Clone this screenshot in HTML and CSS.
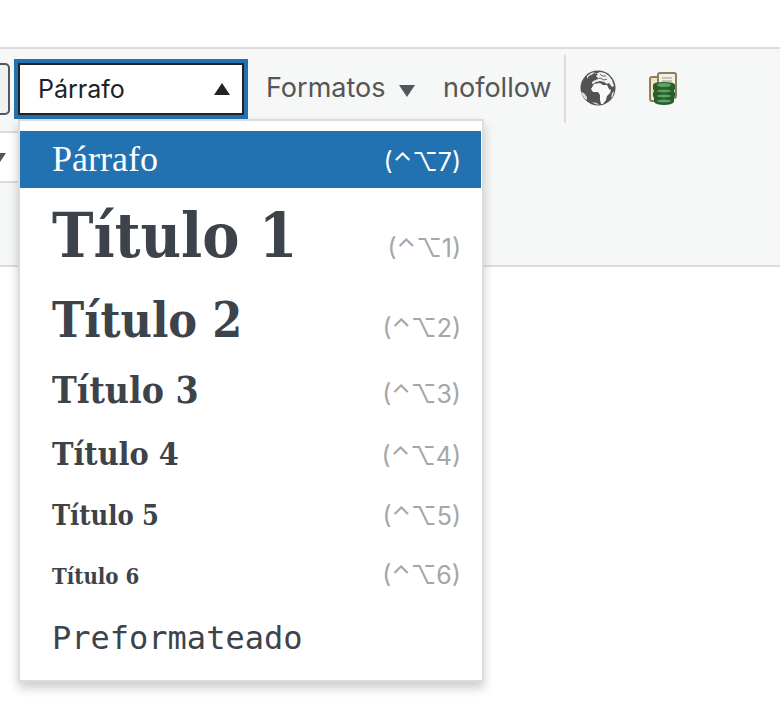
FILE: index.html
```html
<!DOCTYPE html>
<html lang="es">
<head>
	<meta charset="utf-8">
	<meta name="viewport" content="width=device-width, initial-scale=1">
	<title>Editor</title>
	<link rel="stylesheet" href="styles.css">
</head>
<body>
	<div class="editor">
		<div class="toolbar" role="toolbar">
			<div class="toolbar-row">
				<button type="button" class="edge-button" aria-label="Anterior"></button>
				<div class="format">
					<button type="button" class="listbox" id="format-button" aria-haspopup="true" aria-expanded="true">
						<span>Párrafo</span>
						<i class="caret caret-up"></i>
					</button>
					<div class="menu" role="menu" aria-labelledby="format-button">
						<button type="button" class="item p active" role="menuitem"><span>Párrafo</span><kbd>(⌃⌥7)</kbd></button>
						<button type="button" class="item h1" role="menuitem"><span>Título 1</span><kbd>(⌃⌥1)</kbd></button>
						<button type="button" class="item h2" role="menuitem"><span>Título 2</span><kbd>(⌃⌥2)</kbd></button>
						<button type="button" class="item h3" role="menuitem"><span>Título 3</span><kbd>(⌃⌥3)</kbd></button>
						<button type="button" class="item h4" role="menuitem"><span>Título 4</span><kbd>(⌃⌥4)</kbd></button>
						<button type="button" class="item h5" role="menuitem"><span>Título 5</span><kbd>(⌃⌥5)</kbd></button>
						<button type="button" class="item h6" role="menuitem"><span>Título 6</span><kbd>(⌃⌥6)</kbd></button>
						<button type="button" class="item pre" role="menuitem"><span>Preformateado</span></button>
					</div>
				</div>
				<button type="button" class="tool formats">Formatos <i class="caret caret-down"></i></button>
				<button type="button" class="tool">nofollow</button>
				<div class="tool-group">
					<button type="button" class="tool icon" aria-label="Enlace">
						<svg width="36" height="36" viewBox="0 0 36 36">
							<circle cx="18" cy="18" r="17.5" fill="#535353"/>
							<path fill="#f0f1f1" d="M15 4l5-2 5 1 4 3 3 4 2 6-2 1-3-4-2 1-3-2-4-1-3 1-2-1 3-3-2-2 2-2-3-1z"/>
							<path fill="none" stroke="#6b6b6b" d="M20 4l2 2 4 0M17 9l3-1 4 2 3-1"/>
							<path fill="#f8f9f9" d="M14 14l6-1 3 2 4 0 2 4 2 1-1 3-3 3-1 4-3 4-2 0-1-4 0-5-2-3-5 0-2-3z"/>
							<path fill="#e4e5e5" d="M12 12l3-2 2 1-2 2-3 1zM7 6l4-3 4-1-2 2-4 2-2 3z"/>
							<path fill="#dcdddd" d="M1 22l3 1 3 4 0 3-2-1-3-4zM12 32l5 1 2 2-4-1zM32 23l2-2-1 5-2 2z"/>
						</svg>
					</button>
					<button type="button" class="tool icon" aria-label="Insertar datos">
						<svg width="30" height="34" viewBox="0 0 30 34">
							<rect x="2" y="6" width="13" height="24" rx="2" fill="#efe6bd" stroke="#8c8061" stroke-width="2"/>
							<rect x="10" y="2" width="18" height="25" rx="2" fill="#f5f1e2" stroke="#8c8061" stroke-width="2"/>
							<path stroke="#c5c4b8" stroke-width="2" d="M14 7h10M14 10h10"/>
							<path fill="#2a5c2e" d="M5 14q0-3 11-3t11 3v4l-1 2 1 2v3l-1 2v4q-2 3-10 3t-10-3v-4l-1-2v-3l1-2-1-2z"/>
							<g fill="#5da55f">
								<ellipse cx="16" cy="14" rx="7" ry="2"/>
								<ellipse cx="16" cy="20" rx="7" ry="1.5"/>
								<ellipse cx="16" cy="25" rx="7" ry="1.5"/>
								<ellipse cx="16" cy="30" rx="7" ry="1.5"/>
							</g>
						</svg>
					</button>
				</div>
			</div>
			<div class="toolbar-row second">
				<button type="button" class="edge-listbox" aria-label="Familia de fuentes"><i class="caret caret-down"></i></button>
			</div>
		</div>
	</div>
</body>
</html>
```

FILE: styles.css
```css
* {
	box-sizing: border-box;
}
body {
	margin: 0;
	background: #fff;
	font-family: Inter, "Liberation Sans", sans-serif;
	font-size: 27px;
	color: #50575e;
}
button {
	font: inherit;
	color: inherit;
	margin: 0;
	padding: 0;
	border: 0;
	background: none;
	cursor: pointer;
}
.editor {
	min-height: 100vh;
	padding-top: 47px;
}
.toolbar {
	height: 220px;
	padding-top: 6px;
	background: #f6f7f7;
	border-top: 2px solid #dcdcde;
	border-bottom: 2px solid #dcdcde;
}
.toolbar-row {
	display: flex;
	align-items: center;
	height: 68px;
}
.second {
	margin-top: 8px;
	height: 52px;
}
.edge-button {
	width: 10px;
	height: 52px;
	background: #f0f0f1;
	border: 2px solid #50575e;
	border-left: 0;
	border-radius: 0 5px 5px 0;
}
.edge-listbox {
	width: 160px;
	height: 52px;
	background: #fff;
	border: 2px solid #dcdcde;
	border-left: 0;
	text-align: left;
}
.edge-listbox .caret {
	margin-left: -10px;
	vertical-align: middle;
}

/* format listbox and its menu */
.format {
	position: relative;
	margin-left: 8px;
}
.listbox {
	display: flex;
	align-items: center;
	justify-content: space-between;
	width: 226px;
	height: 52px;
	padding: 0 12px 0 18px;
	background: #fff;
	border: 2px solid #1d2327;
	box-shadow: 0 0 0 4px #2271b1;
	color: #1d2327;
	font-size: 25px;
}
.caret {
	display: inline-block;
	border: 8px solid transparent;
}
.caret-up {
	border-top: 0;
	border-bottom: 12px solid #1d2327;
}
.caret-down {
	border-bottom: 0;
	border-top: 12px solid #50575e;
}
.menu {
	position: absolute;
	top: 56px;
	left: 0;
	z-index: 10;
	width: 466px;
	padding: 10px 1px 10px 0;
	background: #fff;
	border: 2px solid #dcdcde;
	box-shadow: 0 6px 10px rgba(0, 0, 0, 0.2);
}
.item {
	display: flex;
	align-items: baseline;
	justify-content: space-between;
	width: 100%;
	padding: 0 20px 0 32px;
	color: #3c434a;
	font-family: Georgia, "DejaVu Serif Condensed", "DejaVu Serif", serif;
	font-weight: bold;
	text-align: left;
	line-height: 61px;
}
.item kbd {
	font-family: Inter, sans-serif;
	font-size: 25px;
	font-weight: normal;
	line-height: 32px;
	color: #a6a6a6;
}
.item.active kbd {
	color: #fff;
}
.active {
	background: #2271b1;
}
.p {
	color: #fff;
	font-family: "Liberation Serif", serif;
	font-weight: normal;
	font-size: 36px;
	line-height: 57px;
}
.h1 {
	font-size: 62px;
	line-height: 96px;
}
.h2 {
	font-size: 48px;
	line-height: 72px;
}
.h3 {
	font-size: 37px;
	line-height: 68px;
}
.h4 {
	font-size: 32px;
}
.h5 {
	font-size: 27px;
}
.h6 {
	font-size: 22px;
}
.pre {
	font-family: "DejaVu Sans Mono", monospace;
	font-weight: normal;
	font-size: 32px;
	line-height: 63px;
}

/* toolbar buttons */
.tool {
	color: #555;
	padding-bottom: 4px;
}
.formats {
	margin: 0 28px 0 22px;
}
.formats .caret {
	margin-left: 6px;
}
.tool-group {
	display: flex;
	align-items: center;
	gap: 32px;
	height: 68px;
	margin-left: 12px;
	padding-left: 14px;
	border-left: 2px solid #dcdcde;
}
.icon {
	padding: 0 0 2px;
}
.icon svg {
	display: block;
}
```
